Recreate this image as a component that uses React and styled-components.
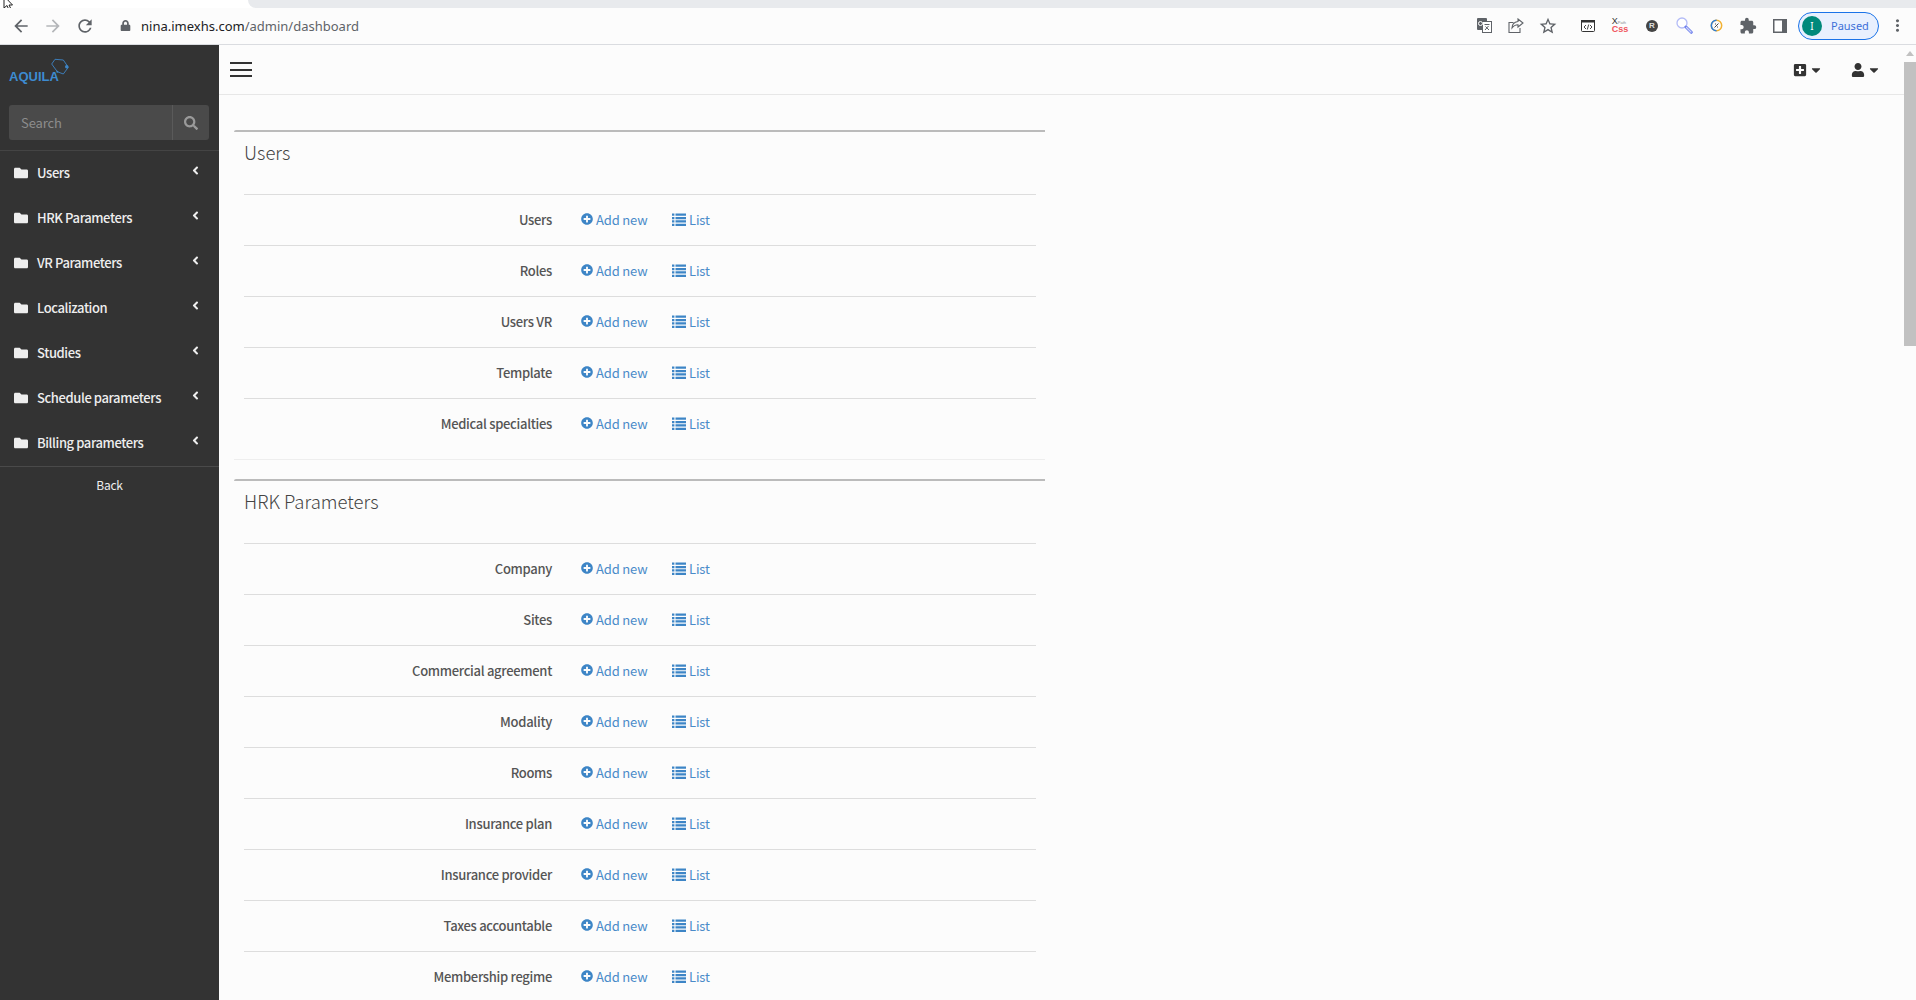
import styled, { createGlobalStyle } from "styled-components";
import {
  FaFolder,
  FaAngleLeft,
  FaSearch,
  FaPlusCircle,
  FaPlusSquare,
  FaUser,
  FaCaretDown,
  FaLock,
} from "react-icons/fa";
import {
  MdArrowBack,
  MdArrowForward,
  MdRefresh,
  MdStarBorder,
  MdExtension,
  MdMoreVert,
} from "react-icons/md";

const sideMenu = [
  "Users",
  "HRK Parameters",
  "VR Parameters",
  "Localization",
  "Studies",
  "Schedule parameters",
  "Billing parameters",
];

const sections = [
  {
    title: "Users",
    rows: ["Users", "Roles", "Users VR", "Template", "Medical specialties"],
  },
  {
    title: "HRK Parameters",
    rows: [
      "Company",
      "Sites",
      "Commercial agreement",
      "Modality",
      "Rooms",
      "Insurance plan",
      "Insurance provider",
      "Taxes accountable",
      "Membership regime",
    ],
  },
];

// fa-list of the old font awesome: four rows, the set in the package has three
const ListIcon = () => (
  <svg width="14" height="13" viewBox="0 0 14 13" fill="#3d85c6">
    <path d="M0 .5h2.400v2.300H0zM3.500 .5H14v2.300H3.500zM0 3.900h2.400v2.300H0zM3.500 3.900H14v2.300H3.500zM0 7.300h2.400v2.300H0zM3.500 7.300H14v2.300H3.500zM0 10.700h2.400V13H0zM3.500 10.700H14V13H3.500z" />
  </svg>
);

const App = () => {
  return (
    <Page>
      <GlobalStyle />
      <TabStrip>
        <Cursor viewBox="0 0 12 12">
          <path d="M1 -4 L1 8 L4 5.500 L6 10 L8 9 L6 5 L9.500 5 Z" fill="#fff" stroke="#222" strokeWidth="1" />
        </Cursor>
        <TabGutter />
      </TabStrip>
      <BrowserBar>
        <NavButton>
          <MdArrowBack />
        </NavButton>
        <NavButton $off>
          <MdArrowForward />
        </NavButton>
        <NavButton>
          <MdRefresh />
        </NavButton>
        <LockIcon>
          <FaLock />
        </LockIcon>
        <Url>
          nina.imexhs.com<UrlPath>/admin/dashboard</UrlPath>
        </Url>
        <Toolbar>
          <ToolSlot>
            <svg width="15" height="15" viewBox="0 0 15 15">
              <rect x="0" y="0" width="10" height="12" rx="1" fill="#5f6368" />
              <rect x="5.500" y="3.500" width="9" height="11" fill="#fff" stroke="#5f6368" />
              <path d="M7.500 6.500h5M10 6v1M8 12l3.500-4M8.500 8.500l3.500 3.500" stroke="#5f6368" fill="none" />
              <circle cx="3.500" cy="5.500" r="2" fill="none" stroke="#fff" />
            </svg>
          </ToolSlot>
          <ToolSlot>
            <svg width="16" height="15" viewBox="0 0 16 15" fill="none" stroke="#5f6368" strokeWidth="1.100">
              <path d="M5.500 4.500H1v10h11V10" />
              <path d="M10 1l5 4-5 4V6.700C7.500 6.700 5.500 7.700 4 10c0-3.500 2.500-6 6-6.500Z" />
            </svg>
          </ToolSlot>
          <ToolSlot $after={8} $size={20}>
            <MdStarBorder />
          </ToolSlot>
          <ToolSlot>
            <svg width="14" height="12" viewBox="0 0 14 12" fill="none" stroke="#333">
              <rect x="0.500" y="0.500" width="13" height="11" rx="1" fill="#fff" />
              <rect x="0" y="0" width="14" height="2.500" fill="#333" stroke="none" />
              <path d="M5 5L3 7l2 2M9 5l2 2-2 2M7.700 4.500 6.300 9.500" strokeWidth="0.900" />
            </svg>
          </ToolSlot>
          <ToolSlot>
            <XCss>
              <XLine>
                X<XTiny>Path</XTiny>
              </XLine>
              <CssMark>Css</CssMark>
            </XCss>
          </ToolSlot>
          <ToolSlot>
            <RBall>R</RBall>
          </ToolSlot>
          <ToolSlot>
            <svg width="17" height="17" viewBox="0 0 17 17" fill="none">
              <circle cx="6" cy="6" r="5" stroke="#b4bcf7" strokeWidth="1.300" fill="#fff" />
              <path d="M10 10l5.300 5.300" stroke="#6f80ec" strokeWidth="3" strokeLinecap="round" />
              <path d="M10.500 10.500l4.500 4.500" stroke="#cdd4fb" strokeWidth="1.200" strokeLinecap="round" />
            </svg>
          </ToolSlot>
          <ToolSlot>
            <svg width="13" height="13" viewBox="0 0 13 13" fill="none">
              <circle cx="6.500" cy="6.500" r="5.200" stroke="#f2b233" strokeWidth="1.500" />
              <path d="M6.500 1.300A5.200 5.200 0 0 0 6.500 11.700" stroke="#2f7fd8" strokeWidth="1.500" />
              <path d="M4.500 8.500l4-4M5 5h1M8 8h-1" stroke="#444" strokeWidth="1" />
            </svg>
          </ToolSlot>
          <ToolSlot $size={18}>
            <MdExtension />
          </ToolSlot>
          <ToolSlot>
            <svg width="14" height="14" viewBox="0 0 14 14">
              <rect x="0.750" y="0.750" width="12.500" height="12.500" fill="#fff" stroke="#5f6368" strokeWidth="1.500" />
              <rect x="9" y="1" width="4" height="12" fill="#5f6368" />
            </svg>
          </ToolSlot>
          <ProfilePill>
            <Avatar>I</Avatar>
            <PausedLabel>Paused</PausedLabel>
          </ProfilePill>
          <ToolSlot $size={19} $before={2}>
            <MdMoreVert />
          </ToolSlot>
        </Toolbar>
      </BrowserBar>
      <Body>
        <Sidebar>
          <LogoBox>
            <LogoText>AQUILA</LogoText>
            <LogoMark viewBox="0 0 20 18" fill="none" stroke="#3d85c6" strokeWidth="0.900">
              <path d="M5 1.300 13.300 2l5 7.300-5 6.700-6-2.300L1.700 6 5 1.300Z" />
              <circle cx="16.700" cy="8.700" r="1.700" fill="#3d85c6" stroke="none" />
              <circle cx="7.300" cy="13.700" r="1" fill="#3d85c6" stroke="none" />
            </LogoMark>
          </LogoBox>
          <SearchBox>
            <SearchField>Search</SearchField>
            <SearchButton>
              <FaSearch />
            </SearchButton>
          </SearchBox>
          <MenuList>
            {sideMenu.map((item) => (
              <MenuItem key={item}>
                <MenuIcon>
                  <FaFolder />
                </MenuIcon>
                <MenuLabel>{item}</MenuLabel>
                <MenuArrow>
                  <FaAngleLeft />
                </MenuArrow>
              </MenuItem>
            ))}
          </MenuList>
          <BackLink>Back</BackLink>
        </Sidebar>
        <Main>
          <TopBar>
            <Hamburger>
              <span />
              <span />
              <span />
            </Hamburger>
            <TopActions>
              <TopAction>
                <FaPlusSquare />
                <FaCaretDown />
              </TopAction>
              <TopAction>
                <FaUser />
                <FaCaretDown />
              </TopAction>
            </TopActions>
          </TopBar>
          <Content>
            {sections.map((section) => (
              <Panel key={section.title}>
                <PanelTitle>{section.title}</PanelTitle>
                {section.rows.map((row) => (
                  <Row key={row}>
                    <RowLabel>{row}</RowLabel>
                    <RowLink $width={91}>
                      <FaPlusCircle />
                      Add new
                    </RowLink>
                    <RowLink>
                      <ListIcon />
                      List
                    </RowLink>
                  </Row>
                ))}
              </Panel>
            ))}
          </Content>
        </Main>
        <ScrollTrack>
          <ScrollArrow />
          <ScrollThumb />
        </ScrollTrack>
      </Body>
    </Page>
  );
};

export default App;

const GlobalStyle = createGlobalStyle`
  html, body {
    margin: 0;
    padding: 0;
    height: 100%;
    overflow: hidden;
    background: #fcfcfc;
  }
  * {
    box-sizing: border-box;
  }
`;

const Page = styled.div`
  width: 1916px;
  height: 1000px;
  display: flex;
  flex-direction: column;
  overflow: hidden;
  background: #fcfcfc;
  font-family: "Noto Sans CJK SC", "Noto Sans", sans-serif;
`;

const TabStrip = styled.div`
  position: relative;
  height: 8px;
  flex: none;
  background: #fff;
  overflow: hidden;
`;

const Cursor = styled.svg`
  position: absolute;
  left: 3px;
  top: 0;
  width: 12px;
  height: 12px;
`;

const TabGutter = styled.div`
  margin-left: 248px;
  height: 8px;
  background: #e8eaed;
  border-bottom-left-radius: 8px;
`;

const BrowserBar = styled.div`
  height: 37px;
  flex: none;
  display: flex;
  align-items: center;
  padding-left: 5px;
  padding-bottom: 1px;
  background: #fcfcfc;
  border-bottom: 1px solid #dadce0;
`;

const NavButton = styled.div`
  width: 32px;
  display: flex;
  justify-content: center;
  font-size: 20px;
  color: ${(props) => (props.$off ? "#b4b6b9" : "#5f6368")};
`;

const LockIcon = styled.div`
  margin-left: 19px;
  width: 21px;
  display: flex;
  font-size: 11px;
  color: #5f6368;
`;

const Url = styled.div`
  font-family: "Noto Sans", sans-serif;
  font-size: 13px;
  color: #202124;
`;

const UrlPath = styled.span`
  color: #5f6368;
`;

const Toolbar = styled.div`
  margin-left: auto;
  display: flex;
  align-items: center;
  padding-right: 3px;
`;

const ToolSlot = styled.div`
  width: 32px;
  display: flex;
  justify-content: center;
  align-items: center;
  font-size: ${(props) => props.$size || 16}px;
  margin-left: ${(props) => props.$before || 0}px;
  margin-right: ${(props) => props.$after || 0}px;
  color: #5f6368;
`;

const XCss = styled.div`
  display: flex;
  flex-direction: column;
  font-family: "Liberation Sans", sans-serif;
  line-height: 7px;
`;

const XLine = styled.span`
  display: flex;
  align-items: baseline;
  font-size: 9px;
  color: #333;
`;

const XTiny = styled.span`
  font-size: 4px;
  color: #888;
`;

const CssMark = styled.span`
  font-size: 9px;
  font-weight: 700;
  color: #f0545c;
`;

const RBall = styled.div`
  width: 12px;
  height: 12px;
  border-radius: 50%;
  background: #444;
  color: #ddd;
  font-family: "Liberation Sans", sans-serif;
  font-size: 8px;
  font-weight: 700;
  line-height: 12px;
  text-align: center;
`;

const ProfilePill = styled.div`
  width: 81px;
  height: 28px;
  margin-left: 2px;
  display: flex;
  align-items: center;
  padding-left: 3px;
  border-radius: 14px;
  border: 1px solid #1a73e8;
  background: #e8f0fe;
`;

const Avatar = styled.div`
  width: 20px;
  height: 20px;
  border-radius: 50%;
  background: #00897b;
  color: #fff;
  font-family: "Noto Sans", sans-serif;
  font-size: 10px;
  line-height: 20px;
  text-align: center;
`;

const PausedLabel = styled.span`
  margin-left: 9px;
  font-family: "Noto Sans", sans-serif;
  font-size: 11px;
  color: #3c6fd8;
`;

const Body = styled.div`
  flex: 1;
  min-height: 0;
  display: flex;
`;

const Sidebar = styled.aside`
  width: 219px;
  flex: none;
  background: #333;
  color: #eee;
`;

const LogoBox = styled.div`
  position: relative;
  height: 60px;
  padding: 25px 0 0 9px;
`;

const LogoText = styled.div`
  font-family: "Liberation Sans", sans-serif;
  font-size: 13px;
  font-weight: 700;
  line-height: 14px;
  color: #3d8bd0;
`;

const LogoMark = styled.svg`
  position: absolute;
  left: 50px;
  top: 13px;
  width: 20px;
  height: 18px;
`;

const SearchBox = styled.div`
  width: 200px;
  height: 35px;
  margin-left: 9px;
  display: flex;
  background: #4a4a4a;
  border-radius: 3px;
`;

const SearchField = styled.div`
  flex: 1;
  padding-left: 12px;
  font-size: 13px;
  letter-spacing: -0.1px;
  line-height: 36px;
  color: #8d8d8d;
`;

const SearchButton = styled.div`
  width: 37px;
  display: flex;
  align-items: center;
  justify-content: center;
  font-size: 14px;
  color: #9a9a9a;
  border-left: 1px solid #5a5a5a;
`;

const MenuList = styled.div`
  margin-top: 10px;
  border-top: 1px solid #444;
  border-bottom: 1px solid #4a4a4a;
`;

const MenuItem = styled.div`
  height: 45px;
  display: flex;
  align-items: center;
  padding: 0 17px 2px 14px;
`;

const MenuIcon = styled.div`
  width: 23px;
  display: flex;
  font-size: 14px;
  color: #eee;
`;

const MenuLabel = styled.div`
  flex: 1;
  font-size: 13px;
  font-weight: 500;
  letter-spacing: -0.4px;
  color: #eee;
`;

const MenuArrow = styled.div`
  display: flex;
  margin-top: -5px;
  font-size: 13px;
  color: #eee;
`;

const BackLink = styled.div`
  height: 40px;
  font-size: 12px;
  letter-spacing: -0.2px;
  line-height: 36px;
  text-align: center;
  color: #eee;
`;

const Main = styled.main`
  flex: 1;
  min-width: 0;
  overflow: hidden;
`;

const TopBar = styled.header`
  height: 50px;
  display: flex;
  align-items: center;
  justify-content: space-between;
  padding: 0 23px 0 11px;
  border-bottom: 1px solid #e7e7e7;
`;

const Hamburger = styled.div`
  width: 22px;
  display: flex;
  flex-direction: column;
  gap: 4.500px;

  span {
    display: block;
    height: 2px;
    background: #333;
  }
`;

const TopActions = styled.div`
  display: flex;
  gap: 28px;
`;

const TopAction = styled.div`
  display: flex;
  align-items: center;
  gap: 2px;
  font-size: 14px;
  color: #333;
`;

const Content = styled.div`
  width: 826px;
  padding: 35px 0 0 15px;
`;

const Panel = styled.section`
  margin-bottom: 19px;
  padding: 0 9px 10px 10px;
  border-top: 2px solid #bbb;
  border-bottom: 1px solid #eee;
  border-top-left-radius: 2px;
`;

const PanelTitle = styled.h2`
  height: 62px;
  margin: 0;
  padding-top: 7px;
  font-size: 18.500px;
  font-weight: 300;
  line-height: 26px;
  color: #444;
`;

const Row = styled.div`
  height: 51px;
  display: flex;
  align-items: center;
  padding-bottom: 2px;
  border-top: 1px solid #ddd;
`;

const RowLabel = styled.div`
  width: 308px;
  margin-right: 29px;
  font-size: 13px;
  font-weight: 500;
  letter-spacing: -0.3px;
  text-align: right;
  color: #555;
`;

const RowLink = styled.div`
  width: ${(props) => (props.$width ? `${props.$width}px` : "auto")};
  display: flex;
  align-items: center;
  gap: 3px;
  font-size: 13px;
  letter-spacing: -0.15px;
  color: #4a8bc9;

  svg {
    font-size: 12px;
    color: #3d85c6;
  }
`;

const ScrollTrack = styled.div`
  width: 12px;
  flex: none;
  padding-top: 6px;
  background: #fcfcfc;
`;

const ScrollArrow = styled.div`
  width: 0;
  height: 0;
  margin: 0 auto 6px;
  border-left: 4px solid transparent;
  border-right: 4px solid transparent;
  border-bottom: 5px solid #c1c1c1;
`;

const ScrollThumb = styled.div`
  height: 284px;
  background: #c1c1c1;
`;
